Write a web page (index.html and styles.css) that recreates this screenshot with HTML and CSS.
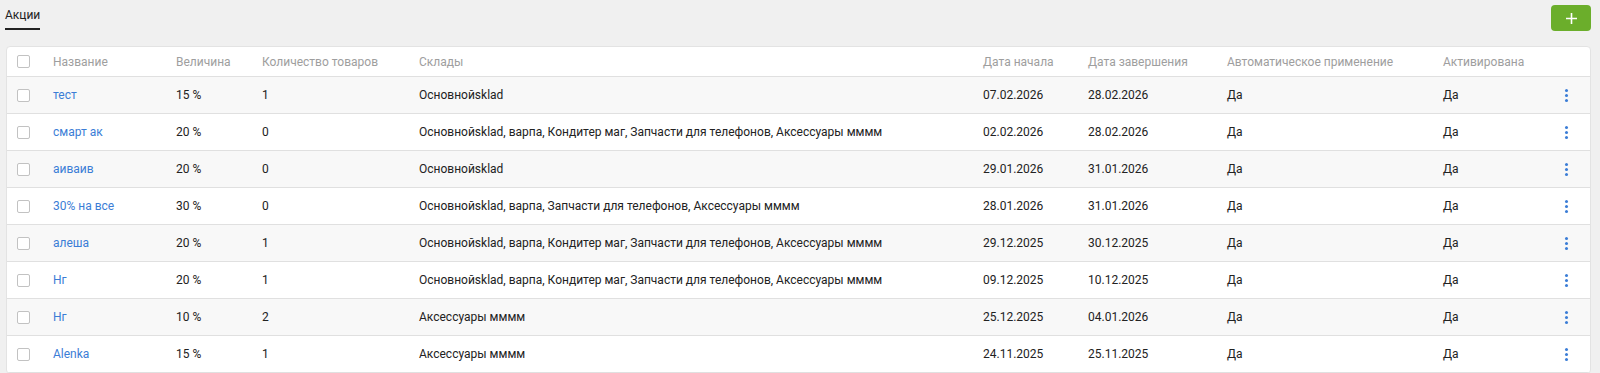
FILE: index.html
```html
<!DOCTYPE html>
<html lang="ru">
<head>
  <meta charset="UTF-8">
  <meta name="viewport" content="width=device-width, initial-scale=1.0">
  <title>Акции</title>
  <link rel="stylesheet" href="styles.css">
</head>
<body>
  <div class="page">
    <div class="topbar">
      <div class="tab">Акции</div>
      <button class="add-button" title="Добавить">
        <svg width="11" height="11" viewBox="0 0 11 11"><path d="M5.5 0v11M0 5.5h11" stroke="#fff" stroke-width="1.6"/></svg>
      </button>
    </div>

    <div class="card">
      <table class="promo-table">
        <colgroup>
          <col style="width: 36px">
          <col style="width: 123px">
          <col style="width: 86px">
          <col style="width: 157px">
          <col style="width: 564px">
          <col style="width: 105px">
          <col style="width: 139px">
          <col style="width: 216px">
          <col style="width: 115px">
          <col style="width: 42px">
        </colgroup>
        <thead>
          <tr>
            <th><span class="checkbox"></span></th>
            <th>Название</th>
            <th>Величина</th>
            <th>Количество товаров</th>
            <th>Склады</th>
            <th>Дата начала</th>
            <th>Дата завершения</th>
            <th>Автоматическое применение</th>
            <th>Активирована</th>
            <th></th>
          </tr>
        </thead>
        <tbody>
          <tr>
            <td><span class="checkbox"></span></td>
            <td><a href="#">тест</a></td>
            <td>15 %</td>
            <td>1</td>
            <td>Основнойsklad</td>
            <td>07.02.2026</td>
            <td>28.02.2026</td>
            <td>Да</td>
            <td>Да</td>
            <td class="menu-cell"><span class="kebab"><i></i><i></i><i></i></span></td>
          </tr>
          <tr>
            <td><span class="checkbox"></span></td>
            <td><a href="#">смарт ак</a></td>
            <td>20 %</td>
            <td>0</td>
            <td>Основнойsklad, варпа, Кондитер маг, Запчасти для телефонов, Аксессуары мммм</td>
            <td>02.02.2026</td>
            <td>28.02.2026</td>
            <td>Да</td>
            <td>Да</td>
            <td class="menu-cell"><span class="kebab"><i></i><i></i><i></i></span></td>
          </tr>
          <tr>
            <td><span class="checkbox"></span></td>
            <td><a href="#">аиваив</a></td>
            <td>20 %</td>
            <td>0</td>
            <td>Основнойsklad</td>
            <td>29.01.2026</td>
            <td>31.01.2026</td>
            <td>Да</td>
            <td>Да</td>
            <td class="menu-cell"><span class="kebab"><i></i><i></i><i></i></span></td>
          </tr>
          <tr>
            <td><span class="checkbox"></span></td>
            <td><a href="#">30% на все</a></td>
            <td>30 %</td>
            <td>0</td>
            <td>Основнойsklad, варпа, Запчасти для телефонов, Аксессуары мммм</td>
            <td>28.01.2026</td>
            <td>31.01.2026</td>
            <td>Да</td>
            <td>Да</td>
            <td class="menu-cell"><span class="kebab"><i></i><i></i><i></i></span></td>
          </tr>
          <tr>
            <td><span class="checkbox"></span></td>
            <td><a href="#">алеша</a></td>
            <td>20 %</td>
            <td>1</td>
            <td>Основнойsklad, варпа, Кондитер маг, Запчасти для телефонов, Аксессуары мммм</td>
            <td>29.12.2025</td>
            <td>30.12.2025</td>
            <td>Да</td>
            <td>Да</td>
            <td class="menu-cell"><span class="kebab"><i></i><i></i><i></i></span></td>
          </tr>
          <tr>
            <td><span class="checkbox"></span></td>
            <td><a href="#">Нг</a></td>
            <td>20 %</td>
            <td>1</td>
            <td>Основнойsklad, варпа, Кондитер маг, Запчасти для телефонов, Аксессуары мммм</td>
            <td>09.12.2025</td>
            <td>10.12.2025</td>
            <td>Да</td>
            <td>Да</td>
            <td class="menu-cell"><span class="kebab"><i></i><i></i><i></i></span></td>
          </tr>
          <tr>
            <td><span class="checkbox"></span></td>
            <td><a href="#">Нг</a></td>
            <td>10 %</td>
            <td>2</td>
            <td>Аксессуары мммм</td>
            <td>25.12.2025</td>
            <td>04.01.2026</td>
            <td>Да</td>
            <td>Да</td>
            <td class="menu-cell"><span class="kebab"><i></i><i></i><i></i></span></td>
          </tr>
          <tr>
            <td><span class="checkbox"></span></td>
            <td><a href="#">Alenka</a></td>
            <td>15 %</td>
            <td>1</td>
            <td>Аксессуары мммм</td>
            <td>24.11.2025</td>
            <td>25.11.2025</td>
            <td>Да</td>
            <td>Да</td>
            <td class="menu-cell"><span class="kebab"><i></i><i></i><i></i></span></td>
          </tr>
        </tbody>
      </table>
    </div>
  </div>
</body>
</html>
```

FILE: styles.css
```css
body {
  margin: 0;
  padding: 0;
  font-family: Roboto, "Liberation Sans", Arial, sans-serif;
  font-size: 12px;
  color: #222;
  background-color: #f0f0f0;
}

.page {
  padding: 0 9px 0 6px;
}

.topbar {
  display: flex;
  justify-content: space-between;
  align-items: flex-start;
  height: 46px;
}

.tab {
  margin-left: -1px;
  padding: 7px 0 5px;
  line-height: 16px;
  border-bottom: 2px solid #212121;
}

.add-button {
  margin-top: 5px;
  width: 40px;
  height: 26px;
  display: flex;
  align-items: center;
  justify-content: center;
  border: none;
  border-radius: 4px;
  background-color: #6bae2b;
  cursor: pointer;
  padding: 0;
}

.card {
  background-color: #fff;
  border: 1px solid #e3e3e3;
  border-radius: 4px;
  overflow: hidden;
}

.promo-table {
  width: 100%;
  table-layout: fixed;
  border-collapse: separate;
  border-spacing: 0;
}

.promo-table th,
.promo-table td {
  padding: 0 0 0 10px;
  text-align: left;
  white-space: nowrap;
  overflow: hidden;
  border-bottom: 1px solid #e0e0e0;
  line-height: 16px;
}

.promo-table th {
  height: 29px;
  font-weight: normal;
  color: #9e9e9e;
}

.promo-table td {
  height: 36px;
}

.promo-table tbody tr:nth-child(odd) {
  background-color: #f8f8f8;
}

.promo-table a {
  color: #3b7dd6;
  text-decoration: none;
}

.checkbox {
  display: block;
  width: 11px;
  height: 11px;
  border: 1px solid #c2c2c2;
  border-radius: 2px;
  background-color: #fff;
}

.promo-table .menu-cell {
  padding-left: 17px;
}

.kebab {
  display: flex;
  flex-direction: column;
  gap: 2px;
  width: 3px;
  cursor: pointer;
}

.kebab i {
  display: block;
  width: 3px;
  height: 3px;
  border-radius: 50%;
  background-color: #3b7dd6;
}
```
